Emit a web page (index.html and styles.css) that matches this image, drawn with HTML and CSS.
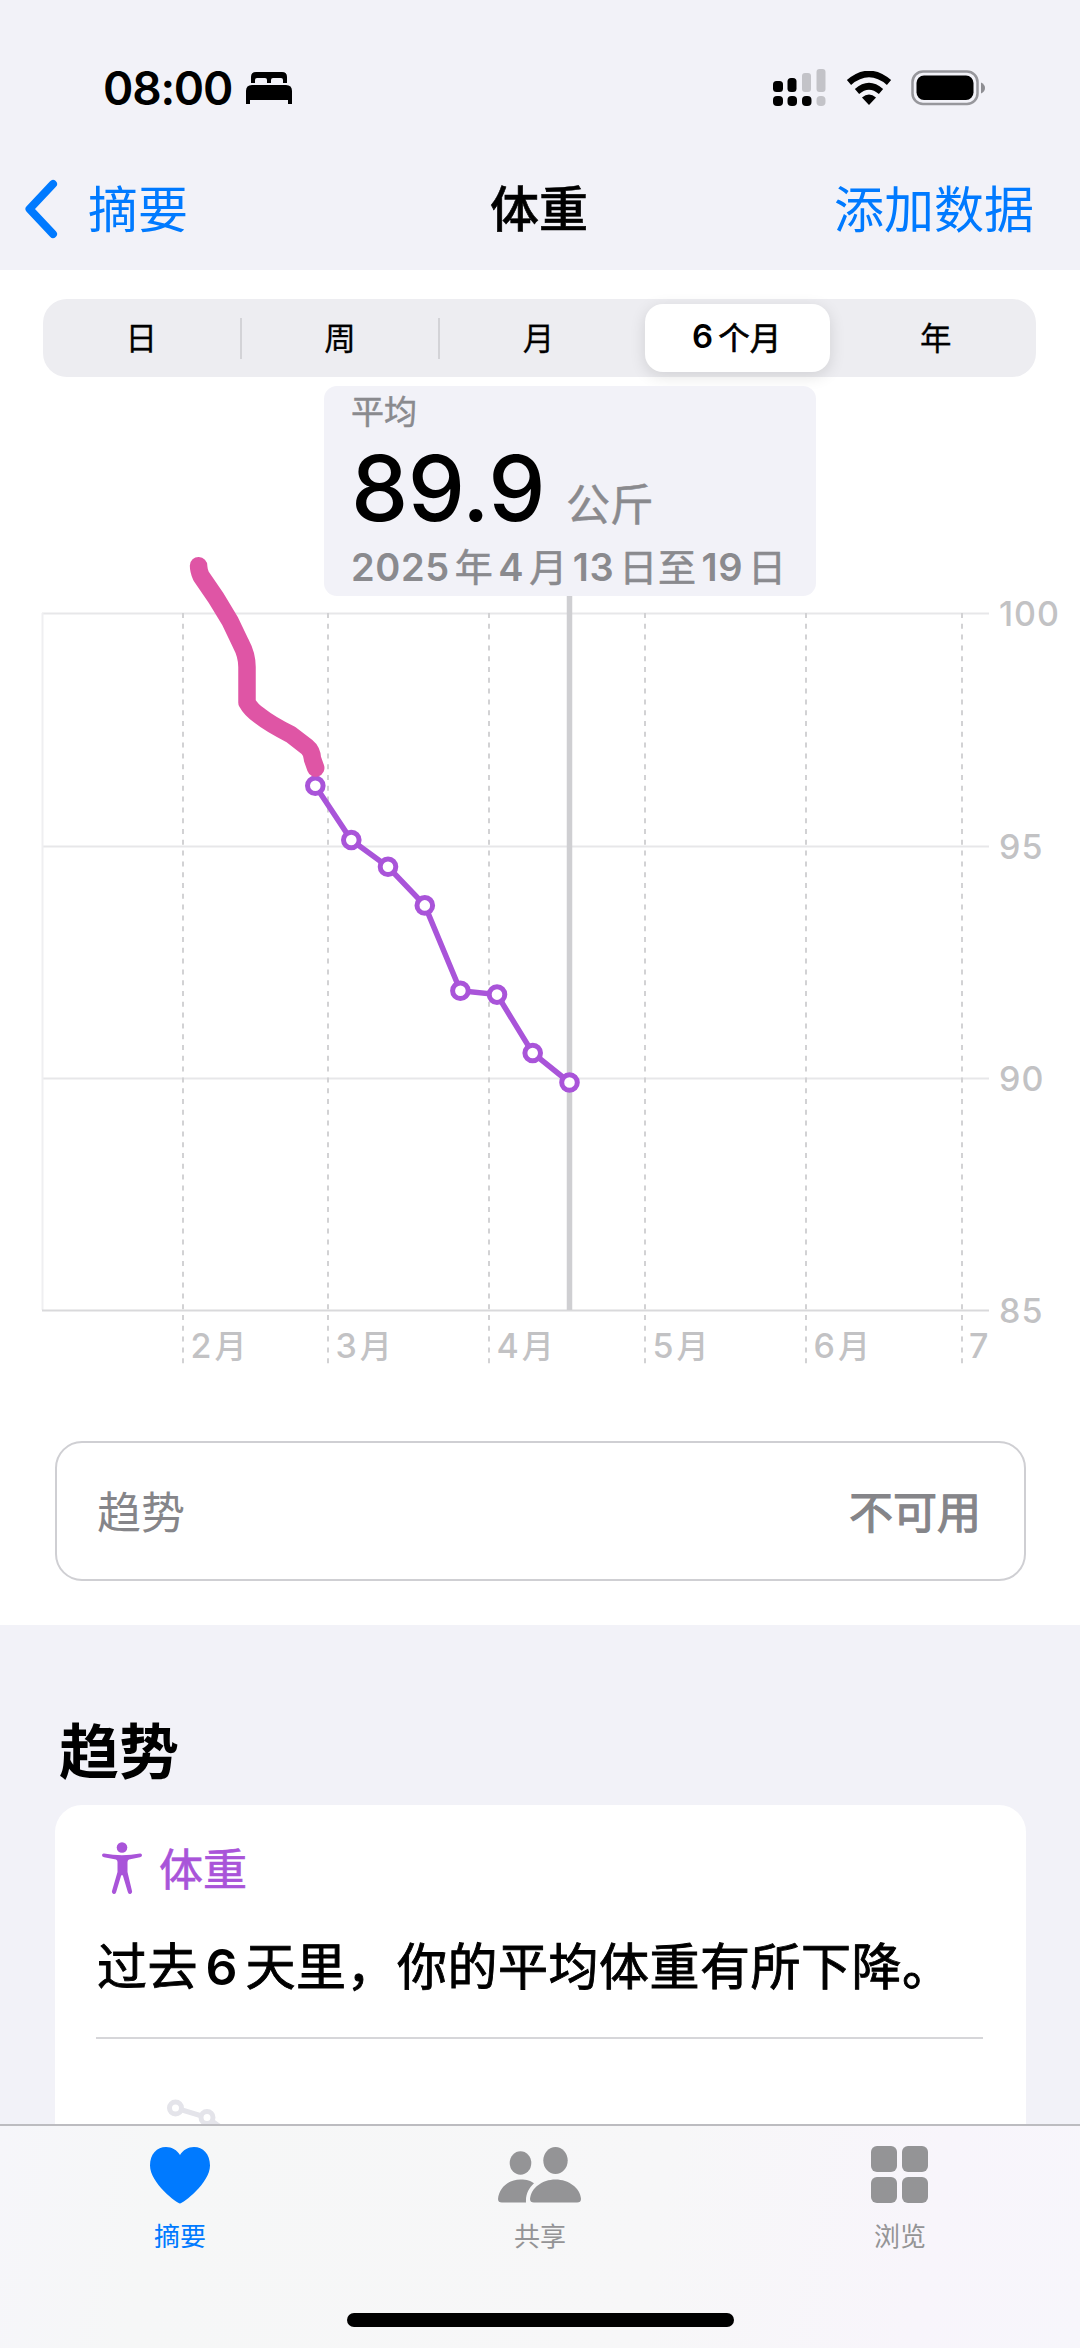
FILE: index.html
```html
<!DOCTYPE html>
<html lang="zh-CN">
<head>
  <meta charset="UTF-8">
  <meta name="viewport" content="width=device-width, initial-scale=1.0">
  <title>体重</title>
  <link rel="stylesheet" href="styles.css">
</head>
<body>
  <div class="screen">
    <header>
      <div class="status-bar">
        <div class="status-left">
          <span class="time">08:00</span>
          <svg class="bed" width="48" height="34" viewBox="0 0 48 34">
            <path d="M6 12V6q0-5 5-5h26q5 0 5 5v6h-4V9q0-2-2-2H28q-2 0-2 2v3h-4V9q0-2-2-2H12q-2 0-2 2v3z"/>
            <path d="M1 33V20q0-6 6-6h34q6 0 6 6v13h-4v-4H5v4z"/>
          </svg>
        </div>
        <div class="status-right">
          <svg width="54" height="38" viewBox="0 0 54 38">
            <rect x="0" y="12" width="10" height="11" rx="3.5"/>
            <rect x="14.5" y="9" width="9" height="14" rx="3.5"/>
            <rect x="29" y="4" width="9" height="19" rx="3" fill="#c3c3c8"/>
            <rect x="43.5" y="0" width="9" height="23" rx="3" fill="#c3c3c8"/>
            <rect x="0" y="27" width="10" height="10" rx="4"/>
            <rect x="14.5" y="27" width="9.5" height="10" rx="4"/>
            <rect x="29" y="27" width="9.5" height="10" rx="4"/>
            <rect x="43.5" y="27" width="9" height="10" rx="4" fill="#c3c3c8"/>
          </svg>
          <svg class="wifi" width="46" height="34" viewBox="0 0 46 34">
            <path d="M3 11.5Q23-5.500 43 11.500" fill="none" stroke="#000" stroke-width="6.500"/>
            <path d="M11 20.500Q23 10 35 20.500" fill="none" stroke="#000" stroke-width="6.500"/>
            <path d="M16 26.500q7-6 14 0l-7 7.500z"/>
          </svg>
          <svg class="battery" width="74" height="36" viewBox="0 0 74 36">
            <rect x="1.500" y="1.500" width="65" height="32.500" rx="10.500" fill="none" stroke="#97979c" stroke-width="2.500"/>
            <rect x="5.500" y="5.500" width="57" height="24.500" rx="7.500"/>
            <path d="M70 12.500q4 2 4 5.500t-4 5.500z" fill="#8e8e93"/>
          </svg>
        </div>
      </div>
      <nav class="nav-bar">
        <a class="back">
          <svg width="36" height="60" viewBox="0 0 36 60"><path d="M30 5L6.500 30L30 55"/></svg>
          <span>摘要</span>
        </a>
        <h1>体重</h1>
        <a class="add">添加数据</a>
      </nav>
    </header>

    <section class="chart-section">
      <div class="segments">
        <span class="segment">日</span>
        <span class="segment divided">周</span>
        <span class="segment divided">月</span>
        <span class="segment active"><b>6</b>个月</span>
        <span class="segment">年</span>
      </div>

      <div class="chart">
        <svg width="1080" height="1000" viewBox="0 377 1080 1000">
          <!-- grid -->
          <g class="grid">
            <path d="M42 613.500H989M42 846.500H989M42 1078.500H989"/>
            <path class="faint" d="M42.500 613V1310"/>
            <path class="base" d="M42 1310.500H989"/>
            <path class="months" d="M183 613V1366M328 613V1366M489 613V1366M645 613V1366M806 613V1366M962 613V1366"/>
          </g>

          <path class="cursor" d="M569.500 590V1310"/>

          <g class="axis">
            <text x="999" y="625.500">100</text>
            <text x="999" y="858.500">95</text>
            <text x="999" y="1090.500">90</text>
            <text x="999" y="1322.500">85</text>
            <text x="190.500" y="1357.500">2<tspan dx="2">月</tspan></text>
            <text x="335.500" y="1357.500">3<tspan dx="2">月</tspan></text>
            <text x="496.500" y="1357.500">4<tspan dx="2">月</tspan></text>
            <text x="652.500" y="1357.500">5<tspan dx="2">月</tspan></text>
            <text x="813.500" y="1357.500">6<tspan dx="2">月</tspan></text>
            <text x="969" y="1357.500">7</text>
          </g>

          <!-- weekly averages -->
          <polyline class="line" points="315.300,785.700 351.300,840 388,866.800 424.800,905.400 460.400,990.700 497,994.600 532.700,1053 569.500,1082.500"/>
          <g class="dots">
            <circle cx="315.300" cy="785.700" r="7.800"/>
            <circle cx="351.300" cy="840" r="7.800"/>
            <circle cx="388" cy="866.800" r="7.800"/>
            <circle cx="424.800" cy="905.400" r="7.800"/>
            <circle cx="460.400" cy="990.700" r="7.800"/>
            <circle cx="497" cy="994.600" r="7.800"/>
            <circle cx="532.700" cy="1053" r="7.800"/>
            <circle cx="569.500" cy="1082.500" r="7.800"/>
          </g>
          <path class="marker" d="M198.600 565.700Q198.500 570 201 576Q217 598 230 621L241 644Q247 655 247 667V702.500Q251 710 260 716Q270 724 291 734.600L307 747Q312 751 312.500 759L315.700 768"/>
        </svg>

        <div class="tooltip">
          <div class="tip-label">平均</div>
          <div class="tip-value"><strong>89.9</strong><span>公斤</span></div>
          <div class="tip-date"><i>2025</i>年<i>4</i>月<i>13</i>日至<i>19</i>日</div>
        </div>
      </div>

      <div class="trend-box">
        <span>趋势</span>
        <span class="unavailable">不可用</span>
      </div>
    </section>

    <section class="trends">
      <h2>趋势</h2>
      <div class="card">
        <div class="card-title">
          <svg width="42" height="52" viewBox="0 0 42 52">
            <circle cx="21" cy="5.500" r="5.300"/>
            <path d="M3 11.500Q1 11.300 1 13.300Q1 15 3 15.300L15 17.500Q16.500 18 16.500 20V30L11 49Q10.500 51.300 12.500 52Q14.500 52.300 15.200 50L20 34Q21 32 22 34L26.800 50Q27.500 52.300 29.500 52Q31.500 51.300 31 49L26.500 30V20Q26.500 18 28 17.500L39 15.300Q41 15 41 13.300Q41 11.300 39 11.500Q21 15 3 11.500Z"/>
          </svg>
          <span>体重</span>
        </div>
        <p class="summary">过去<i>6</i>天里，你的平均体重有所下降。</p>
        <svg class="mini-chart" width="887" height="88" viewBox="0 0 887 86">
          <path d="M79.500 69L111 78.500L130 92"/>
          <circle cx="79.500" cy="69" r="6"/>
          <circle cx="111" cy="78.500" r="6"/>
        </svg>
      </div>
    </section>

    <footer class="tab-bar">
      <div class="tabs">
        <a class="tab active">
          <svg width="62" height="60" viewBox="0 0 62 60"><path d="M31 58.500C28 58.500 1 38 1 20.500C1 9 8 2 17 2C23 2 28 5 31 10C34 5 39 2 45 2C54 2 61 9 61 20.500C61 38 34 58.500 31 58.500Z"/></svg>
          <span>摘要</span>
        </a>
        <a class="tab">
          <svg width="84" height="60" viewBox="0 0 84 60">
            <ellipse cx="22.500" cy="18" rx="10.800" ry="11.800"/>
            <path d="M22.500 34.500C29 34.500 33 36 36 38.300C31 43 27.500 49 28 57.500H4Q0 57.500 0 54C1 44 9 34.500 22.500 34.500Z"/>
            <ellipse cx="57.500" cy="15.500" rx="12.200" ry="13.500"/>
            <path d="M57.500 34.500C71 34.500 82 43 83 54Q83 57.500 79 57.500H36Q32 57.500 32 54C33 43 44 34.500 57.500 34.500Z"/>
          </svg>
          <span>共享</span>
        </a>
        <a class="tab">
          <svg width="58" height="60" viewBox="0 0 58 60">
            <rect x="0" y="1" width="26" height="26" rx="6"/>
            <rect x="31" y="1" width="26" height="26" rx="6"/>
            <rect x="0" y="32" width="26" height="26" rx="6"/>
            <rect x="31" y="32" width="26" height="26" rx="6"/>
          </svg>
          <span>浏览</span>
        </a>
      </div>
      <div class="home-indicator"></div>
    </footer>
  </div>
</body>
</html>
```

FILE: styles.css
```css
* {
  box-sizing: border-box;
}

body {
  margin: 0;
  font-family: Inter, 'Noto Sans CJK SC', sans-serif;
  color: #000;
  background: #f2f2f8;
}

i, b {
  font-style: normal;
}

svg {
  display: block;
}

.screen {
  width: 1080px;
  height: 2348px;
  display: flex;
  flex-direction: column;
  overflow: hidden;
}

/* header */
header {
  height: 270px;
  flex: none;
  padding-top: 58px;
}

.status-bar {
  display: flex;
  justify-content: space-between;
  height: 60px;
  padding: 0 95px 0 103px;
}

.status-left, .status-right {
  display: flex;
  align-items: center;
}

.time {
  font-size: 46px;
  font-weight: 600;
  line-height: 60px;
  letter-spacing: -1.2px;
}

.bed {
  margin-left: 13px;
}

.wifi {
  margin-left: 19px;
}

.battery {
  margin-left: 19px;
}

.nav-bar {
  display: grid;
  grid-template-columns: 1fr auto 1fr;
  align-items: center;
  height: 120px;
  margin-top: 30px;
  padding: 2px 46px 0 23px;
  font-size: 50px;
  line-height: 72px;
}

.nav-bar h1 {
  margin: 2px 0 0 21px;
  font-size: 49px;
  font-weight: 500;
  -webkit-text-stroke: 0.6px #000;
}

.back, .add {
  color: #007aff;
}

.add, .back span {
  padding-top: 2px;
}

.back {
  display: flex;
  align-items: center;
  gap: 29px;
}

.back path {
  fill: none;
  stroke: #007aff;
  stroke-width: 8;
  stroke-linecap: round;
  stroke-linejoin: round;
}

.add {
  text-align: right;
}

/* chart */
.chart-section {
  height: 1355px;
  flex: none;
  padding-top: 29px;
  background: #fff;
}

.segments {
  display: grid;
  grid-template-columns: repeat(5, 1fr);
  height: 78px;
  margin: 0 44px 0 43px;
  padding: 5px 0;
  border-radius: 24px;
  background: #ededf1;
}

.segment {
  display: flex;
  align-items: center;
  justify-content: center;
  position: relative;
  padding: 0 2px 4px 0;
  font-size: 31.5px;
  -webkit-text-stroke: 0.3px #000;
}

.divided::before {
  content: "";
  position: absolute;
  left: -2px;
  top: 14px;
  width: 2px;
  height: 41px;
  background: #d3d3d7;
}

.segment.active {
  margin: 0 7px 0 6px;
  border-radius: 18px;
  background: #fff;
  box-shadow: 0 4px 16px rgba(0, 0, 0, 0.12);
  -webkit-text-stroke: 0.7px #000;
}

.segment b {
  font-size: 33px;
  font-weight: 600;
  margin-right: 5px;
  -webkit-text-stroke: 0;
}

.chart {
  position: relative;
  height: 1000px;
}

.grid path {
  fill: none;
  stroke: #e7e7e9;
  stroke-width: 2;
}

.grid .faint {
  stroke: #efeff1;
}

.grid .base {
  stroke: #d9d9db;
}

.grid .months {
  stroke: #d2d2d4;
  stroke-dasharray: 5 5.8;
}

.cursor {
  stroke: #cfcfd2;
  stroke-width: 5.5;
}

.axis text {
  font-size: 34px;
  font-weight: 500;
  letter-spacing: 1px;
  fill: #c2c2c4;
}

.axis tspan {
  font-size: 32px;
}

.line {
  fill: none;
  stroke: #a954d9;
  stroke-width: 5.5;
}

.dots circle {
  fill: #fff;
  stroke: #a954d9;
  stroke-width: 5;
}

.marker {
  fill: none;
  stroke: #df55a5;
  stroke-width: 17.5;
  stroke-linecap: round;
  stroke-linejoin: round;
}

.tooltip {
  position: absolute;
  left: 324px;
  top: 9px;
  width: 492px;
  height: 210px;
  padding: 3px 0 0 27px;
  border-radius: 13px;
  background: #f2f2f8;
  color: #8a8a8e;
}

.tip-label {
  font-size: 33px;
  line-height: 46px;
  -webkit-text-stroke: 0.5px #8a8a8e;
}

.tip-value {
  display: flex;
  align-items: baseline;
  height: 106px;
  line-height: 106px;
  white-space: nowrap;
}

.tip-value strong {
  font-size: 91px;
  font-weight: 500;
  letter-spacing: -0.6px;
  color: #000;
}

.tip-value span {
  margin-left: 21px;
  font-size: 44px;
  -webkit-text-stroke: 0.5px #8a8a8e;
}

.tip-date {
  font-size: 38px;
  line-height: 52px;
  letter-spacing: 0.6px;
  white-space: nowrap;
  -webkit-text-stroke: 0.6px #8a8a8e;
}

.tip-date i {
  font-weight: 600;
  margin: 0 5px;
  -webkit-text-stroke: 0;
}

.tip-date i:first-child {
  margin-left: 0;
}

.trend-box {
  display: flex;
  align-items: center;
  justify-content: space-between;
  height: 140px;
  margin: 64px 54px 0 55px;
  padding: 0 43px 3px 40px;
  border: 2px solid #cfcfd3;
  border-radius: 27px;
  font-size: 44px;
  color: #858589;
}

.unavailable {
  -webkit-text-stroke: 1.2px #858589;
}

/* trends */
.trends {
  height: 499px;
  flex: none;
  padding: 82px 54px 0 55px;
  overflow: hidden;
}

.trends h2 {
  margin: 0;
  padding-left: 4px;
  font-size: 60px;
  font-weight: 700;
  line-height: 90px;
}

.card {
  height: 330px;
  margin-top: 8px;
  padding: 28px 43px 0 41px;
  border-radius: 27px 27px 0 0;
  background: #fff;
}

.card-title {
  display: flex;
  align-items: center;
  height: 70px;
  padding-left: 5px;
  font-size: 44px;
  color: #a954d9;
  -webkit-text-stroke: 0.7px #a954d9;
}

.card-title svg {
  margin-right: 16px;
  fill: #a954d9;
  stroke: none;
}

.card-title span {
  margin-top: -2px;
}

.summary {
  margin: 28px 0 34px;
  padding-left: 1px;
  font-size: 50px;
  line-height: 72px;
  letter-spacing: 0.5px;
  white-space: nowrap;
  -webkit-text-stroke: 0.9px #000;
}

.summary i {
  margin: 0 7.5px;
  font-weight: 600;
  -webkit-text-stroke: 0;
}

.mini-chart {
  border-top: 2px solid #d6d6d9;
}

.mini-chart path,
.mini-chart circle {
  fill: #fff;
  stroke: #e4e4ea;
  stroke-width: 5;
}

/* tab bar */
.tab-bar {
  height: 224px;
  flex: none;
  border-top: 2px solid #bcbcc0;
  background: linear-gradient(100deg, #f6f6fa 0, #f6f7f7 15%, #f7f7f8 60%, #f8f5fb 85%, #f7f6fb 100%);
}

.tabs {
  display: flex;
  height: 187px;
  padding-top: 19px;
}

.tab {
  flex: 1;
  display: flex;
  flex-direction: column;
  align-items: center;
  font-size: 26px;
  line-height: 38px;
  color: #949496;
}

.tab svg {
  fill: #949496;
  margin-bottom: 13px;
}

.tab.active {
  color: #007aff;
}

.tab.active svg {
  fill: #007aff;
}

.home-indicator {
  width: 387px;
  height: 14px;
  margin: 0 auto;
  border-radius: 7px;
  background: #000;
}
```
